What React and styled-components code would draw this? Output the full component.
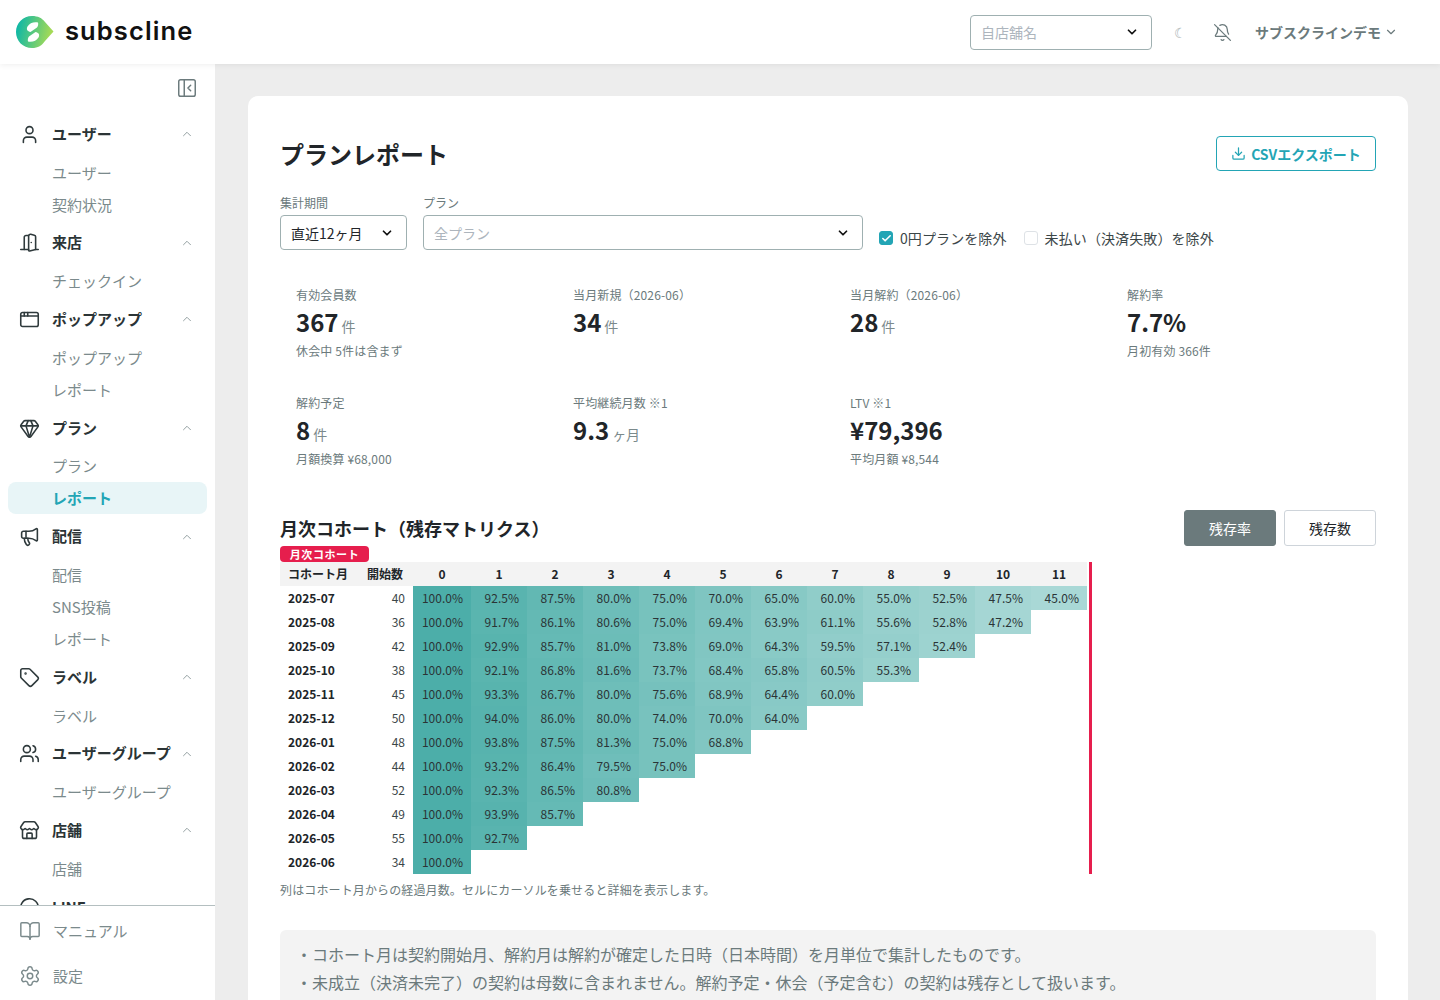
import React from "react";
import styled, { createGlobalStyle } from "styled-components";
import {
  User,
  DoorOpen,
  AppWindow,
  Gem,
  Megaphone,
  Tag,
  Users,
  Store,
  MessageCircle,
  BookOpen,
  Settings,
  BellOff,
  Download,
  PanelLeftClose,
  ChevronUp,
  ChevronDown,
  Check as CheckIcon,
} from "lucide-react";

const GlobalStyle = createGlobalStyle`
  html, body, #root { height: 100%; margin: 0; }
  body {
    overflow: hidden;
    font-family: "Noto Sans CJK JP", "Noto Sans", sans-serif;
    color: #212529;
    background: #ededed;
  }
  * { box-sizing: border-box; }
`;

const NAV = [
  { label: "ユーザー", icon: User, items: ["ユーザー", "契約状況"] },
  { label: "来店", icon: DoorOpen, items: ["チェックイン"] },
  { label: "ポップアップ", icon: AppWindow, items: ["ポップアップ", "レポート"] },
  { label: "プラン", icon: Gem, items: ["プラン", "レポート"], active: "レポート" },
  { label: "配信", icon: Megaphone, items: ["配信", "SNS投稿", "レポート"] },
  { label: "ラベル", icon: Tag, items: ["ラベル"] },
  { label: "ユーザーグループ", icon: Users, items: ["ユーザーグループ"] },
  { label: "店舗", icon: Store, items: ["店舗"] },
  { label: "LINE", icon: MessageCircle, items: [] },
];

const STATS = [
  { label: "有効会員数", value: "367", unit: "件", note: "休会中 5件は含まず" },
  { label: "当月新規（2026-06）", value: "34", unit: "件" },
  { label: "当月解約（2026-06）", value: "28", unit: "件" },
  { label: "解約率", value: "7.7%", note: "月初有効 366件" },
  { label: "解約予定", value: "8", unit: "件", note: "月額換算 ¥68,000" },
  { label: "平均継続月数 ※1", value: "9.3", unit: "ヶ月" },
  { label: "LTV ※1", value: "¥79,396", note: "平均月額 ¥8,544" },
];

const COHORTS = [
  ["2025-07", 40, [100, 92.5, 87.5, 80, 75, 70, 65, 60, 55, 52.5, 47.5, 45]],
  ["2025-08", 36, [100, 91.7, 86.1, 80.6, 75, 69.4, 63.9, 61.1, 55.6, 52.8, 47.2]],
  ["2025-09", 42, [100, 92.9, 85.7, 81, 73.8, 69, 64.3, 59.5, 57.1, 52.4]],
  ["2025-10", 38, [100, 92.1, 86.8, 81.6, 73.7, 68.4, 65.8, 60.5, 55.3]],
  ["2025-11", 45, [100, 93.3, 86.7, 80, 75.6, 68.9, 64.4, 60]],
  ["2025-12", 50, [100, 94, 86, 80, 74, 70, 64]],
  ["2026-01", 48, [100, 93.8, 87.5, 81.3, 75, 68.8]],
  ["2026-02", 44, [100, 93.2, 86.4, 79.5, 75]],
  ["2026-03", 52, [100, 92.3, 86.5, 80.8]],
  ["2026-04", 49, [100, 93.9, 85.7]],
  ["2026-05", 55, [100, 92.7]],
  ["2026-06", 34, [100]],
];

const MONTHS = [0, 1, 2, 3, 4, 5, 6, 7, 8, 9, 10, 11];

const cellColor = (rate) => {
  const alpha = 0.7 - (100 - rate) * 0.0066;
  return `rgba(0, 140, 132, ${alpha})`;
};

function Logo() {
  return (
    <LogoWrap>
      <svg width="38" height="32" viewBox="0 0 38 32">
        <defs>
          <linearGradient id="logoGrad" x1="0" y1="0" x2="1" y2="0.2">
            <stop offset="0" stopColor="#00b4ae" />
            <stop offset="1" stopColor="#a5da56" />
          </linearGradient>
        </defs>
        <path
          d="M16 0C22 0 26 2 29 6L37.5 15.5L29 25C26 29.5 22 32 16 32C7 32 0 25 0 16C0 7 7 0 16 0Z"
          fill="url(#logoGrad)"
        />
        <path
          d="M22 6.5C18 5.5 13.5 7 11.5 10.5C10 13.5 11.5 15.5 14.5 16L21 11.5C22 10.5 22.5 8 22 6.5Z"
          fill="#fff"
        />
        <path
          d="M12 25.5C16 26.5 20.5 25 22.5 21.5C24 18.5 22.5 16.5 19.5 16L13 20.5C12 21.5 11.5 24 12 25.5Z"
          fill="#fff"
        />
      </svg>
      <LogoText>subscline</LogoText>
    </LogoWrap>
  );
}

function App() {
  return (
    <Page>
      <GlobalStyle />
      <Header>
        <Logo />
        <HeaderRight>
          <StoreSelect>
            <Placeholder>自店舗名</Placeholder>
            <ChevronDown size={14} strokeWidth={3} color="#111" />
          </StoreSelect>
          <Moon>☾</Moon>
          <BellButton>
            <BellOff size={19} strokeWidth={1.6} />
          </BellButton>
          <UserMenu>
            サブスクラインデモ
            <ChevronDown size={14} strokeWidth={2} />
          </UserMenu>
        </HeaderRight>
      </Header>

      <Body>
        <Sidebar>
          <Collapse>
            <PanelLeftClose size={22} strokeWidth={1.6} />
          </Collapse>
          <Nav>
            {NAV.map((group) => (
              <div key={group.label}>
                <GroupRow>
                  <group.icon size={21} strokeWidth={1.8} />
                  <GroupLabel>{group.label}</GroupLabel>
                  <ChevronUp size={14} strokeWidth={1.6} color="#8d9a9b" />
                </GroupRow>
                {group.items.map((item) => (
                  <SubItem key={item} $active={group.active === item}>
                    {item}
                  </SubItem>
                ))}
              </div>
            ))}
          </Nav>
          <SideFooter>
            <FooterItem>
              <BookOpen size={22} strokeWidth={1.6} />
              マニュアル
            </FooterItem>
            <FooterItem>
              <Settings size={22} strokeWidth={1.6} />
              設定
            </FooterItem>
          </SideFooter>
        </Sidebar>

        <Main>
          <Card>
            <TitleRow>
              <Title>プランレポート</Title>
              <ExportButton>
                <Download size={15} strokeWidth={2} />
                CSVエクスポート
              </ExportButton>
            </TitleRow>

            <Filters>
              <Field>
                <FieldLabel>集計期間</FieldLabel>
                <Select $width={127}>
                  <span>直近12ヶ月</span>
                  <ChevronDown size={14} strokeWidth={3} color="#111" />
                </Select>
              </Field>
              <Field>
                <FieldLabel>プラン</FieldLabel>
                <Select $width={440}>
                  <Placeholder>全プラン</Placeholder>
                  <ChevronDown size={14} strokeWidth={3} color="#111" />
                </Select>
              </Field>
              <CheckGroup>
                <Check>
                  <CheckBox $checked>
                    <CheckIcon size={11} strokeWidth={3.5} color="#fff" />
                  </CheckBox>
                  0円プランを除外
                </Check>
                <Check>
                  <CheckBox />
                  未払い（決済失敗）を除外
                </Check>
              </CheckGroup>
            </Filters>

            <StatGrid>
              {STATS.map((stat) => (
                <Stat key={stat.label}>
                  <StatLabel>{stat.label}</StatLabel>
                  <StatValue>
                    {stat.value}
                    {stat.unit && <StatUnit>{stat.unit}</StatUnit>}
                  </StatValue>
                  {stat.note && <StatNote>{stat.note}</StatNote>}
                </Stat>
              ))}
            </StatGrid>

            <SectionRow>
              <SectionTitle>月次コホート（残存マトリクス）</SectionTitle>
              <ToggleGroup>
                <Toggle $on>残存率</Toggle>
                <Toggle>残存数</Toggle>
              </ToggleGroup>
            </SectionRow>
            <Badge>月次コホート</Badge>

            <TableWrap>
              <Table>
                <colgroup>
                  <col width="77" />
                  <col width="56" />
                  <col width="58" />
                  {MONTHS.slice(1).map((m) => (
                    <col key={m} width="56" />
                  ))}
                </colgroup>
                <thead>
                  <tr>
                    <HeadCell $left>コホート月</HeadCell>
                    <HeadCell>開始数</HeadCell>
                    {MONTHS.map((m) => (
                      <HeadCell key={m}>{m}</HeadCell>
                    ))}
                  </tr>
                </thead>
                <tbody>
                  {COHORTS.map(([month, start, rates]) => (
                    <tr key={month}>
                      <MonthCell>{month}</MonthCell>
                      <StartCell>{start}</StartCell>
                      {MONTHS.map((m) =>
                        rates[m] === undefined ? (
                          <EmptyCell key={m} />
                        ) : (
                          <RateCell key={m} style={{ background: cellColor(rates[m]) }}>
                            {rates[m].toFixed(1)}%
                          </RateCell>
                        )
                      )}
                    </tr>
                  ))}
                </tbody>
              </Table>
            </TableWrap>
            <Caption>列はコホート月からの経過月数。セルにカーソルを乗せると詳細を表示します。</Caption>

            <NoteBox>
              <p>・コホート月は契約開始月、解約月は解約が確定した日時（日本時間）を月単位で集計したものです。</p>
              <p>・未成立（決済未完了）の契約は母数に含まれません。解約予定・休会（予定含む）の契約は残存として扱います。</p>
            </NoteBox>
          </Card>
        </Main>
      </Body>
    </Page>
  );
}

const Page = styled.div`
  height: 100vh;
  display: flex;
  flex-direction: column;
  overflow: hidden;
`;

const Header = styled.header`
  height: 64px;
  flex: none;
  background: #fff;
  box-shadow: 0 1px 6px rgba(0, 0, 0, 0.07);
  display: flex;
  align-items: center;
  justify-content: space-between;
  padding: 0 42px 0 16px;
  position: relative;
  z-index: 2;
`;

const LogoWrap = styled.div`
  display: flex;
  align-items: center;
  gap: 11px;
`;

const LogoText = styled.span`
  font-family: "Inter", sans-serif;
  font-weight: 600;
  font-size: 25.5px;
  line-height: 30px;
  letter-spacing: 1.1px;
  color: #111;
  margin-bottom: 2px;
`;

const HeaderRight = styled.div`
  display: flex;
  align-items: center;
`;

const StoreSelect = styled.div`
  width: 182px;
  height: 35px;
  border: 1px solid #9fb0b1;
  border-radius: 4px;
  display: flex;
  align-items: center;
  justify-content: space-between;
  padding: 0 12px 0 10px;
  font-size: 14px;
`;

const Placeholder = styled.span`
  color: #adb5bd;
  font-size: 14px;
`;

const Moon = styled.span`
  width: 12px;
  margin-left: 22px;
  font-size: 14px;
  font-weight: 300;
  color: #a9b2b3;
`;

const BellButton = styled.span`
  display: flex;
  margin-left: 27px;
  color: #6b7a7c;
`;

const UserMenu = styled.span`
  display: flex;
  align-items: center;
  gap: 3px;
  margin-left: 23px;
  font-size: 14px;
  font-weight: 700;
  color: #6b7a7c;
`;

const Body = styled.div`
  flex: 1;
  min-height: 0;
  display: flex;
`;

const Sidebar = styled.aside`
  width: 215px;
  flex: none;
  background: #fff;
  display: flex;
  flex-direction: column;
`;

const Collapse = styled.div`
  flex: none;
  height: 48px;
  display: flex;
  justify-content: flex-end;
  align-items: center;
  padding-right: 17px;
  color: #6b7a7c;
`;

const Nav = styled.nav`
  flex: 1;
  min-height: 0;
  overflow: hidden;
  padding: 0 8px;
`;

const GroupRow = styled.div`
  height: 44.6px;
  display: flex;
  align-items: center;
  padding: 0 13px 0 11px;
  color: #2f3a3c;
`;

const GroupLabel = styled.span`
  flex: 1;
  margin-left: 12px;
  font-size: 15px;
  line-height: 20px;
  margin-top: -1px;
  font-weight: 700;
  color: #2b3436;
`;

const SubItem = styled.div`
  height: 32px;
  display: flex;
  align-items: center;
  padding-left: 44px;
  padding-bottom: 1px;
  border-radius: 8px;
  font-size: 15px;
  font-weight: ${(p) => (p.$active ? 700 : 400)};
  color: ${(p) => (p.$active ? "#23a5b5" : "#7b8a8c")};
  background: ${(p) => (p.$active ? "#e8f5f7" : "transparent")};
`;

const SideFooter = styled.div`
  flex: none;
  height: 95px;
  border-top: 1px solid #b4bfc0;
  background: #fff;
  padding-top: 2px;
`;

const FooterItem = styled.div`
  height: 45px;
  display: flex;
  align-items: center;
  gap: 12px;
  padding-left: 19px;
  font-size: 15px;
  color: #7b8a8c;
`;

const Main = styled.main`
  flex: 1;
  min-width: 0;
  overflow: hidden;
  padding: 32px 32px 0 33px;
`;

const Card = styled.section`
  background: #fff;
  border-radius: 10px;
  padding: 40px 32px 32px;
`;

const TitleRow = styled.div`
  display: flex;
  align-items: center;
  justify-content: space-between;
`;

const Title = styled.h1`
  margin: 0;
  font-size: 24px;
  font-weight: 700;
  color: #212529;
`;

const ExportButton = styled.button`
  width: 160px;
  height: 35px;
  border: 1px solid #23a5b5;
  border-radius: 4px;
  background: #fff;
  color: #23a5b5;
  font-family: inherit;
  font-size: 14px;
  font-weight: 700;
  display: flex;
  align-items: center;
  justify-content: center;
  gap: 5px;
  padding: 0;
`;

const Filters = styled.div`
  display: flex;
  align-items: flex-end;
  gap: 16px;
  margin-top: 24px;
`;

const Field = styled.div`
  display: flex;
  flex-direction: column;
  gap: 5px;
`;

const FieldLabel = styled.label`
  font-size: 12px;
  line-height: 15px;
  color: #6b7a7c;
`;

const Select = styled.div`
  width: ${(p) => p.$width}px;
  height: 35px;
  border: 1px solid #9fb0b1;
  border-radius: 4px;
  display: flex;
  align-items: center;
  justify-content: space-between;
  padding: 0 12px 0 10px;
  font-size: 14px;
  color: #212529;
`;

const CheckGroup = styled.div`
  display: flex;
  gap: 17px;
  height: 22px;
  margin-bottom: 1px;
  align-items: center;
`;

const Check = styled.span`
  display: flex;
  align-items: center;
  gap: 7px;
  font-size: 14px;
  letter-spacing: 0.1px;
  color: #3b4648;
`;

const CheckBox = styled.span`
  width: 14px;
  height: 14px;
  border-radius: 3px;
  display: flex;
  align-items: center;
  justify-content: center;
  border: 1px solid ${(p) => (p.$checked ? "#23a5b5" : "#dee2e6")};
  background: ${(p) => (p.$checked ? "#23a5b5" : "#fff")};
`;

const StatGrid = styled.div`
  display: grid;
  grid-template-columns: repeat(4, 277px);
  grid-auto-rows: 108px;
  margin-top: 26px;
`;

const Stat = styled.div`
  padding: 10px 16px 0;
`;

const StatLabel = styled.div`
  font-size: 12px;
  line-height: 18px;
  letter-spacing: 0.15px;
  color: #6b7a7c;
`;

const StatValue = styled.div`
  display: flex;
  align-items: baseline;
  margin-top: 1px;
  font-size: 24px;
  line-height: 34px;
  height: 34px;
  font-weight: 700;
  color: #212529;
`;

const StatUnit = styled.span`
  margin-left: 3px;
  font-size: 14px;
  line-height: 14px;
  font-weight: 400;
  color: #7b8a8c;
`;

const StatNote = styled.div`
  margin-top: 3px;
  font-size: 12px;
  line-height: 18px;
  letter-spacing: 0.15px;
  color: #6b7a7c;
`;

const SectionRow = styled.div`
  display: flex;
  align-items: center;
  justify-content: space-between;
  margin-top: 18px;
`;

const SectionTitle = styled.h2`
  margin: 0;
  font-size: 18px;
  font-weight: 700;
  color: #212529;
`;

const ToggleGroup = styled.div`
  display: flex;
  gap: 8px;
`;

const Toggle = styled.button`
  width: 92px;
  height: 36px;
  padding: 0;
  border-radius: 3px;
  font-family: inherit;
  font-size: 14px;
  border: 1px solid ${(p) => (p.$on ? "#6b7a7c" : "#ced4da")};
  background: ${(p) => (p.$on ? "#6b7a7c" : "#fff")};
  color: ${(p) => (p.$on ? "#fff" : "#212529")};
`;

const Badge = styled.div`
  width: 89px;
  height: 16px;
  border-radius: 4px;
  background: #e61e4d;
  color: #fff;
  font-size: 11px;
  line-height: 16px;
  font-weight: 700;
  letter-spacing: 0.6px;
  text-align: center;
`;

const TableWrap = styled.div`
  width: 812px;
  border-right: 3px solid #e61e4d;
`;

const Table = styled.table`
  width: 807px;
  table-layout: fixed;
  border-collapse: collapse;
  font-size: 12px;
  td, th { padding: 0 0 2px; height: 24px; }
`;

const HeadCell = styled.th`
  background: #f3f3f3;
  font-weight: 700;
  color: #212529;
  text-align: ${(p) => (p.$left ? "left" : "center")};
  padding-left: ${(p) => (p.$left ? "8px" : "0")} !important;
`;

const MonthCell = styled.td`
  font-weight: 700;
  padding-left: 8px !important;
`;

const StartCell = styled.td`
  text-align: right;
  padding-right: 8px !important;
  color: #3b4648;
`;

const RateCell = styled.td`
  text-align: right;
  padding-right: 8px !important;
  color: #2b3436;
`;

const EmptyCell = styled.td``;

const Caption = styled.p`
  margin: 8px 0 0;
  font-size: 12px;
  line-height: 16px;
  letter-spacing: 0.13px;
  color: #6b7a7c;
`;

const NoteBox = styled.div`
  margin-top: 32px;
  background: #f3f3f3;
  border-radius: 6px;
  padding: 10px 16px 16px;
  font-size: 16px;
  line-height: 28px;
  color: #6b7a7c;
  p { margin: 0; }
`;

export default App;
